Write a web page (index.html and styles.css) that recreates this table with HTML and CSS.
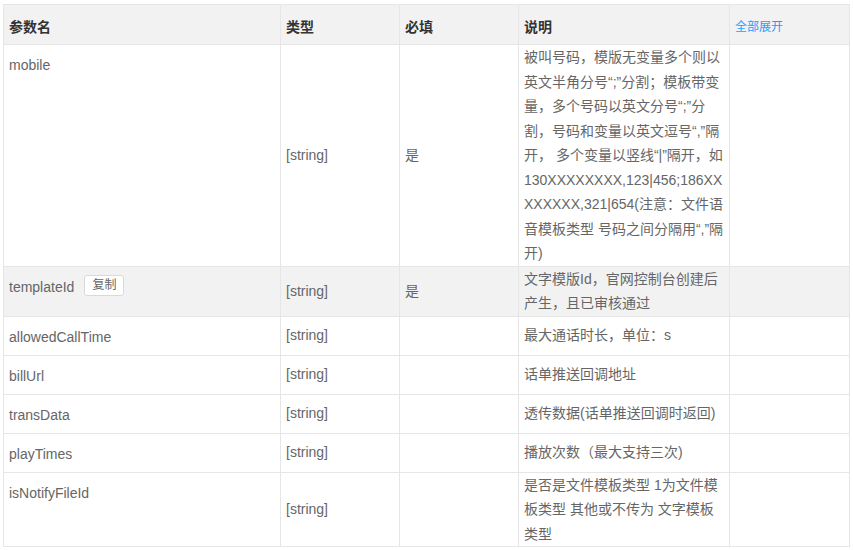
FILE: index.html
```html
<!DOCTYPE html>
<html lang="zh-CN">
<head>
<meta charset="utf-8">
<title>参数</title>
<link rel="stylesheet" href="styles.css">
</head>
<body>
<div class="wrap">
  <table class="params">
    <colgroup>
      <col class="c-name">
      <col class="c-type">
      <col class="c-req">
      <col class="c-desc">
      <col class="c-op">
    </colgroup>
    <thead>
      <tr>
        <th>参数名</th>
        <th>类型</th>
        <th>必填</th>
        <th>说明</th>
        <th><a class="expand">全部展开</a></th>
      </tr>
    </thead>
    <tbody>
      <tr>
        <td class="name">mobile</td>
        <td>[string]</td>
        <td>是</td>
        <td class="desc">被叫号码，模版无变量多个则以英文半角分号“;”分割；模板带变量，多个号码以英文分号“;”分割，号码和变量以英文逗号“,”隔开， 多个变量以竖线“|”隔开，如130XXXXXXXX,123|456;186XXXXXXXX,321|654(注意：文件语音模板类型 号码之间分隔用“,”隔开)</td>
        <td></td>
      </tr>
      <tr class="hover">
        <td class="name">templateId<span class="copy">复制</span></td>
        <td>[string]</td>
        <td>是</td>
        <td class="desc">文字模版Id，官网控制台创建后产生，且已审核通过</td>
        <td></td>
      </tr>
      <tr>
        <td class="name">allowedCallTime</td>
        <td>[string]</td>
        <td></td>
        <td class="desc">最大通话时长，单位：s</td>
        <td></td>
      </tr>
      <tr>
        <td class="name">billUrl</td>
        <td>[string]</td>
        <td></td>
        <td class="desc">话单推送回调地址</td>
        <td></td>
      </tr>
      <tr>
        <td class="name">transData</td>
        <td>[string]</td>
        <td></td>
        <td class="desc">透传数据(话单推送回调时返回)</td>
        <td></td>
      </tr>
      <tr>
        <td class="name">playTimes</td>
        <td>[string]</td>
        <td></td>
        <td class="desc">播放次数（最大支持三次)</td>
        <td></td>
      </tr>
      <tr>
        <td class="name">isNotifyFileId</td>
        <td>[string]</td>
        <td></td>
        <td class="desc">是否是文件模板类型 1为文件模板类型 其他或不传为 文字模板类型</td>
        <td></td>
      </tr>
    </tbody>
  </table>
</div>
</body>
</html>
```

FILE: styles.css
```css
html, body {
  margin: 0;
  padding: 0;
  background: #fff;
}

.wrap {
  padding: 4px 0 0 3px;
}

.params {
  border-collapse: collapse;
  table-layout: fixed;
  width: 846px;
  font-family: "Liberation Sans", "Noto Sans CJK SC", sans-serif;
  font-size: 14px;
  color: #666;
  border: 1px solid #e6e6e6;
}

.c-name { width: 277px; }
.c-type { width: 119px; }
.c-req { width: 119px; }
.c-desc { width: 211px; }
.c-op { width: 120px; }

.params th,
.params td {
  border: 1px solid #e6e6e6;
  text-align: left;
}

.params thead tr {
  height: 40px;
}

.params tbody tr {
  height: 39px;
}

.params th {
  background: #f2f2f2;
  color: #333;
  font-weight: bold;
  padding: 4px 5px 0;
  line-height: 24px;
}

.params td {
  padding: 0 5px;
  line-height: 24.5px;
  vertical-align: middle;
}

.params td.name {
  vertical-align: top;
  padding-top: 8px;
}

.params td.desc {
  word-break: break-all;
}

.params tr.hover td {
  background: #f2f2f2;
}

.expand {
  color: #1e9fff;
  font-size: 12px;
  font-weight: normal;
  cursor: pointer;
}

.copy {
  display: inline-block;
  vertical-align: top;
  margin-left: 10px;
  height: 21px;
  line-height: 19px;
  padding: 0 7px;
  box-sizing: border-box;
  border: 1px solid #d9d9d9;
  border-radius: 3px;
  background: #fff;
  font-size: 12px;
  color: #666;
}
```
